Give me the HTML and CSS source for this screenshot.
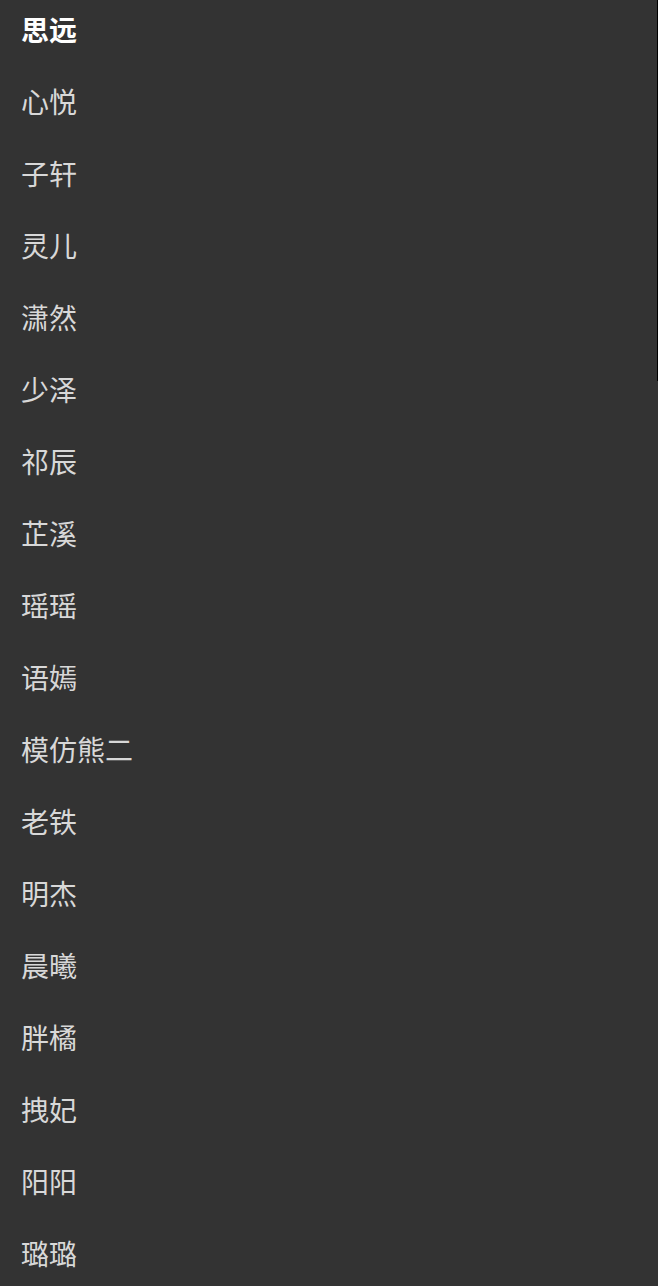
FILE: index.html
```html
<!DOCTYPE html>
<html lang="zh-CN">
<head>
<meta charset="utf-8">
<title>列表</title>
<link rel="stylesheet" href="styles.css">
</head>
<body>
<ul class="list">
  <li class="item active">思远</li>
  <li class="item">心悦</li>
  <li class="item">子轩</li>
  <li class="item">灵儿</li>
  <li class="item">潇然</li>
  <li class="item">少泽</li>
  <li class="item">祁辰</li>
  <li class="item">芷溪</li>
  <li class="item">瑶瑶</li>
  <li class="item">语嫣</li>
  <li class="item">模仿熊二</li>
  <li class="item">老铁</li>
  <li class="item">明杰</li>
  <li class="item">晨曦</li>
  <li class="item">胖橘</li>
  <li class="item">拽妃</li>
  <li class="item">阳阳</li>
  <li class="item">璐璐</li>
</ul>
<div class="scrollbar"></div>
</body>
</html>
```
FILE: styles.css
```css
html, body {
  margin: 0;
  padding: 0;
  background: #333333;
  height: 100%;
  overflow: hidden;
}
body {
  font-family: "Noto Sans CJK SC", "Noto Sans", sans-serif;
  position: relative;
}
.list {
  list-style: none;
  margin: 0;
  padding: 0;
}
.item {
  box-sizing: border-box;
  height: 72px;
  line-height: 58px;
  padding: 0 0 14px 21px;
  font-size: 28px;
  color: #d8d8d8;
}
.item.active {
  color: #ffffff;
  font-weight: 700;
}
.scrollbar {
  position: absolute;
  top: 0;
  right: 0;
  width: 1px;
  height: 381px;
  background: #000000;
}
```
